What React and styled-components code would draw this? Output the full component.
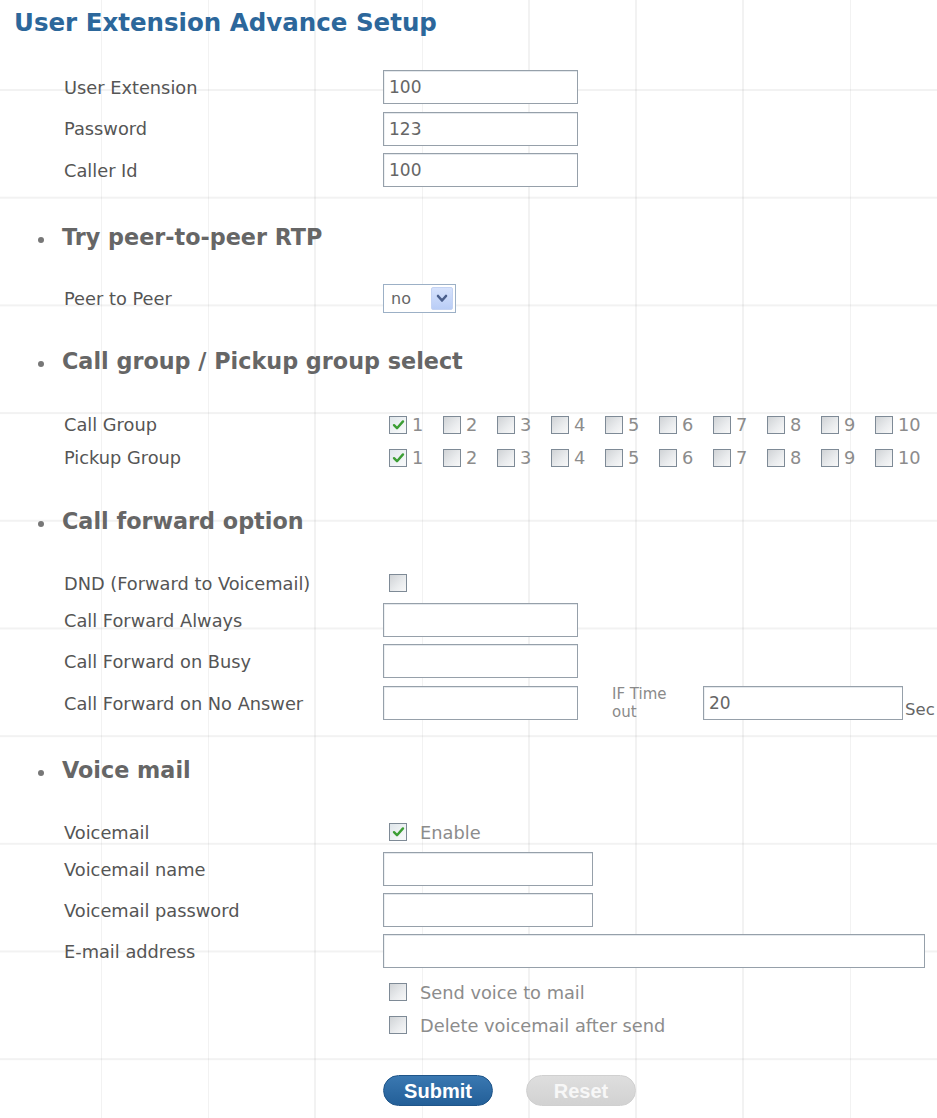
import React from "react";
import styled, { createGlobalStyle } from "styled-components";

const GlobalStyle = createGlobalStyle`
  html, body { margin: 0; padding: 0; }
  body {
    min-height: 1118px;
    background-color: #ffffff;
    background-image:
      linear-gradient(to right, rgba(0, 0, 0, 0.05) 2px, transparent 2px),
      linear-gradient(to bottom, rgba(0, 0, 0, 0.05) 2px, transparent 2px);
    background-size: 107px 107.7px;
    background-position: 100px 89px;
    font-family: "DejaVu Sans", Verdana, sans-serif;
  }
`;

const Page = styled.div`
  padding-top: 8px;
  width: 937px;
`;

const Title = styled.h1`
  margin: 0 0 0 14px;
  font: bold 24.5px/30px "DejaVu Sans", Verdana, sans-serif;
  color: #2c679b;
`;

const SectionTitle = styled.h2`
  position: relative;
  margin: ${(p) => p.$top}px 0 0 0;
  padding-left: 62px;
  font: bold 22.3px/30px "DejaVu Sans", Verdana, sans-serif;
  color: #666;
  &::before {
    content: "";
    position: absolute;
    left: 38px;
    top: 15px;
    width: 6px;
    height: 6px;
    border-radius: 50%;
    background: #777;
  }
`;

const FieldGroup = styled.div`
  display: flex;
  flex-direction: column;
  gap: ${(p) => p.$gap ?? 7}px;
  margin-top: ${(p) => p.$top}px;
  padding-left: 64px;
`;

const Row = styled.div`
  display: grid;
  grid-template-columns: 319px 1fr;
  align-items: center;
  height: ${(p) => p.$h ?? 34}px;
  margin-top: ${(p) => p.$mt ?? 0}px;
`;

const Label = styled.span`
  font-size: 17.8px;
  color: #555;
  white-space: nowrap;
`;

const Control = styled.div`
  display: flex;
  align-items: center;
  height: 100%;
`;

const TextInput = styled.input`
  box-sizing: border-box;
  width: ${(p) => p.$w}px;
  height: 34px;
  margin: 0;
  padding: 0 5px;
  border: 1px solid #96a0aa;
  box-shadow: inset 0 1px 0 #e4e8ec, inset 1px 0 0 #eef1f3;
  background: #fff;
  font: 17px "DejaVu Sans", Verdana, sans-serif;
  color: #666;
  outline: none;
`;

const Select = styled.div`
  box-sizing: border-box;
  width: 73px;
  height: 29px;
  border: 1px solid #9cb0c6;
  background: #fff;
  display: flex;
  align-items: center;
  justify-content: space-between;
  padding: 0 2px 0 7px;
  font-size: 16px;
  color: #666;
`;

const SelectButton = styled.span`
  width: 22px;
  height: 23px;
  border-radius: 2px;
  background: linear-gradient(to bottom, #d6e2fc, #b9cdf6);
  border: 1px solid #c4d3f3;
  box-sizing: border-box;
  display: flex;
  align-items: center;
  justify-content: center;
`;

const Options = styled.div`
  display: flex;
  align-items: center;
  padding-left: 6px;
`;

const Option = styled.label`
  display: inline-flex;
  align-items: center;
  gap: ${(p) => p.$gap ?? 5}px;
  width: ${(p) => (p.$w ? `${p.$w}px` : "auto")};
  font-size: 17.8px;
  color: #8c8c8c;
  white-space: nowrap;
`;

const Box = styled.span`
  box-sizing: border-box;
  flex: none;
  width: 18px;
  height: 18px;
  border: 1px solid #7e8a96;
  background: ${(p) =>
    p.$checked
      ? "linear-gradient(135deg, #dfe6ea 0%, #f6f8f9 80%)"
      : "linear-gradient(135deg, #d0d3d6 0%, #eaecee 60%, #f8f8f8 100%)"};
  display: inline-flex;
  align-items: center;
  justify-content: center;
`;

const Hint = styled.span`
  width: 70px;
  margin-left: 34px;
  margin-right: 21px;
  font-size: 15px;
  line-height: 18px;
  color: #8a8a8a;
`;

const Unit = styled.span`
  align-self: flex-end;
  margin-left: 2px;
  font-size: 16.5px;
  line-height: 22px;
  color: #666;
`;

const Buttons = styled.div`
  display: flex;
  gap: 33px;
  margin-top: 37px;
  padding-left: 383px;
`;

const Button = styled.button`
  box-sizing: border-box;
  width: 110px;
  height: 31px;
  border-radius: 16px;
  padding: 0;
  font: bold 20px/1 "Liberation Sans", Arial, sans-serif;
  color: ${(p) => (p.$primary ? "#ffffff" : "#f7f7f7")};
  background: ${(p) =>
    p.$primary
      ? "linear-gradient(to bottom, #3a78b1, #235f98)"
      : "linear-gradient(to bottom, #dedede, #d2d2d2)"};
  border: 1px solid ${(p) => (p.$primary ? "#1f5589" : "#d0d0d0")};
`;

function Check({ checked }) {
  return (
    <Box $checked={checked}>
      {checked && (
        <svg width="13" height="12" viewBox="0 0 13 12">
          <path
            d="M2 6.2 L5 9.2 L11 2.4"
            fill="none"
            stroke="#3c9e34"
            strokeWidth="2.4"
            strokeLinecap="round"
            strokeLinejoin="round"
          />
        </svg>
      )}
    </Box>
  );
}

function Chevron() {
  return (
    <svg width="12" height="9" viewBox="0 0 12 9">
      <path
        d="M2 2 L6 6.5 L10 2"
        fill="none"
        stroke="#4a5f8c"
        strokeWidth="2.6"
        strokeLinecap="round"
        strokeLinejoin="round"
      />
    </svg>
  );
}

const groups = [1, 2, 3, 4, 5, 6, 7, 8, 9, 10];

function GroupChoices() {
  return (
    <Options>
      {groups.map((n) => (
        <Option key={n} $w={54}>
          <Check checked={n === 1} />
          {n}
        </Option>
      ))}
    </Options>
  );
}

function Field({ label, children, h, mt }) {
  return (
    <Row $h={h} $mt={mt}>
      <Label>{label}</Label>
      <Control>{children}</Control>
    </Row>
  );
}

export default function App() {
  return (
    <Page>
      <GlobalStyle />
      <Title>User Extension Advance Setup</Title>

      <FieldGroup $top={32} $gap={7.5}>
        <Field label="User Extension">
          <TextInput $w={195} defaultValue="100" readOnly />
        </Field>
        <Field label="Password">
          <TextInput $w={195} defaultValue="123" readOnly />
        </Field>
        <Field label="Caller Id">
          <TextInput $w={195} defaultValue="100" readOnly />
        </Field>
      </FieldGroup>

      <SectionTitle $top={35}>Try peer-to-peer RTP</SectionTitle>
      <FieldGroup $top={29}>
        <Field label="Peer to Peer">
          <Select>
            no
            <SelectButton>
              <Chevron />
            </SelectButton>
          </Select>
        </Field>
      </FieldGroup>

      <SectionTitle $top={31}>Call group / Pickup group select</SectionTitle>
      <FieldGroup $top={32} $gap={0}>
        <Field label="Call Group" h={33}>
          <GroupChoices />
        </Field>
        <Field label="Pickup Group" h={33}>
          <GroupChoices />
        </Field>
      </FieldGroup>

      <SectionTitle $top={32}>Call forward option</SectionTitle>
      <FieldGroup $top={34}>
        <Field label="DND (Forward to Voicemail)" h={26}>
          <Options>
            <Check />
          </Options>
        </Field>
        <Field label="Call Forward Always">
          <TextInput $w={195} readOnly />
        </Field>
        <Field label="Call Forward on Busy">
          <TextInput $w={195} readOnly />
        </Field>
        <Field label="Call Forward on No Answer">
          <TextInput $w={195} readOnly />
          <Hint>IF Time out</Hint>
          <TextInput $w={200} defaultValue="20" readOnly />
          <Unit>Sec</Unit>
        </Field>
      </FieldGroup>

      <SectionTitle $top={36}>Voice mail</SectionTitle>
      <FieldGroup $top={34}>
        <Field label="Voicemail" h={26}>
          <Options>
            <Option $gap={13}>
              <Check checked />
              Enable
            </Option>
          </Options>
        </Field>
        <Field label="Voicemail name">
          <TextInput $w={210} readOnly />
        </Field>
        <Field label="Voicemail password">
          <TextInput $w={210} readOnly />
        </Field>
        <Field label="E-mail address">
          <TextInput $w={542} readOnly />
        </Field>
        <Field label="" h={26} mt={4}>
          <Options>
            <Option $gap={13}>
              <Check />
              Send voice to mail
            </Option>
          </Options>
        </Field>
        <Field label="" h={26}>
          <Options>
            <Option $gap={13}>
              <Check />
              Delete voicemail after send
            </Option>
          </Options>
        </Field>
      </FieldGroup>

      <Buttons>
        <Button $primary type="button">Submit</Button>
        <Button type="button">Reset</Button>
      </Buttons>
    </Page>
  );
}
